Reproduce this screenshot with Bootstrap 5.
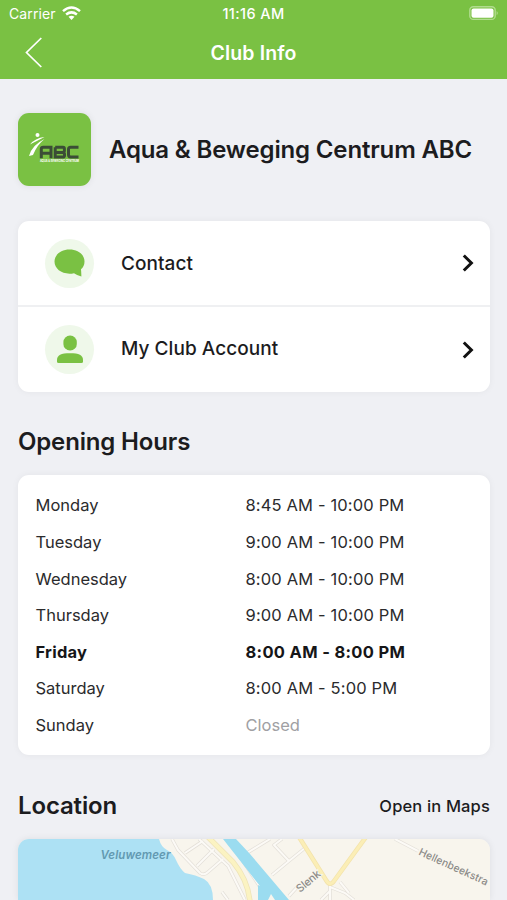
<!DOCTYPE html>
<html lang="en">
<head>
<meta charset="utf-8">
<meta name="viewport" content="width=device-width, initial-scale=1">
<title>Club Info</title>
<link href="https://cdn.jsdelivr.net/npm/bootstrap@5.3.0/dist/css/bootstrap.min.css" rel="stylesheet">
<style>
:root{--club:#7ac143;--ink:#1c1c1e}
body{font-family:Inter,"Liberation Sans",sans-serif;background:#eff0f4;color:var(--ink);height:900px;overflow:hidden}
.app-head{background:var(--club);height:79px}
.status-bar{height:27px;font-size:14px;line-height:27px}
.head-side{flex:1 1 0}
.carrier{margin-left:9px;letter-spacing:.1px}
.wifi{margin-left:6px}
.clock{font-weight:500;font-size:14.5px;letter-spacing:.4px}
.title-bar{height:52px}
.page-title{font-size:19.5px;font-weight:600;white-space:nowrap;line-height:48px;padding-bottom:1px;letter-spacing:.15px}
main{padding:34px 17px 0 18px}
.club{gap:18px;height:73px}
.club-logo{width:73px;height:73px;border-radius:11px;background:var(--club);box-shadow:0 0 7px rgba(0,0,0,.08)}
.club-name{font-size:24px;font-weight:600;letter-spacing:-.15px;white-space:nowrap;padding-top:2px}
.panel{border-radius:11px;background:#fff;box-shadow:0 0 7px rgba(0,0,0,.05)}
.menu{margin-top:35px}
.menu-row{height:84px;padding:0 16px 0 27px;color:var(--ink);text-decoration:none;font-size:19px;font-weight:500}
.menu-row+.menu-row{border-top:2px solid #eff0f2;height:87px}
.menu-label{padding-top:2px;letter-spacing:.05px}
.menu-row+.menu-row .menu-label{padding-top:0}
.bubble{width:49px;height:49px;border-radius:50%;background:#eff8ea;margin-right:27px}
.section-title{font-size:24px;line-height:30px;font-weight:600;letter-spacing:-.15px}
.hours-title{margin:35px 0 18px}
.hours{padding:12.4px 17px 11.6px 17.5px;font-size:16.5px;color:#2b2b2d}
.hours .day-row{height:36.64px}
.day-name{width:210px}
.day-time{letter-spacing:.15px}
.today{font-weight:700;color:#161618;letter-spacing:.25px}
.today .day-time{letter-spacing:.33px}
.closed{color:#a0a0a3}
.location-head{margin:36px 0 18px;height:30px}
.maps-link{font-size:16.5px;font-weight:500;color:var(--ink);letter-spacing:.15px}
.map-panel{height:61px;border-radius:11px 11px 0 0;overflow:hidden;box-shadow:0 0 7px rgba(0,0,0,.08)}
svg{display:block;flex-shrink:0}
</style>
</head>
<body>
<header class="app-head text-white">
  <div class="status-bar d-flex align-items-center">
    <div class="head-side d-flex align-items-center"><span class="carrier">Carrier</span>
      <svg class="wifi" width="19" height="15" viewBox="0 0 19 15" fill="none" stroke="#fff" stroke-width="2.5"><path d="M1 5.1Q9.5-2.2 18 5.1M4.1 8.5Q9.5 4.2 14.9 8.5"/><path d="M6.5 10.8Q9.5 8.6 12.5 10.8L9.5 14Z" fill="#fff" stroke="none"/></svg>
    </div>
    <div class="clock text-center">11:16 AM</div>
    <div class="head-side d-flex justify-content-end">
      <svg class="me-2" width="30" height="15" viewBox="0 0 30 15"><rect x=".8" y=".8" width="25.4" height="12.6" rx="3.5" fill="none" stroke="#b1dc8e" stroke-width="1.4"/><rect x="2.5" y="2.5" width="22" height="9.3" rx="2" fill="#fff"/><path d="M27.6 5Q30 7.1 27.6 9.2Z" fill="#b1dc8e"/></svg>
    </div>
  </div>
  <div class="title-bar d-flex align-items-center">
    <div class="head-side"><svg class="ms-4" width="19" height="32" viewBox="0 0 19 32" fill="none" stroke="#fff" stroke-width="1.7"><path d="M17.3 1L2.5 15.5L17.3 30"/></svg></div>
    <div class="page-title text-center">Club Info</div><div class="head-side"></div>
  </div>
</header>
<main>
  <section class="club d-flex align-items-center">
    <div class="club-logo">
      <svg width="73" height="73" viewBox="0 0 73 73">
        <circle cx="19.5" cy="22" r="2" fill="#fff"/>
        <path d="M12 31.5Q17 25 26.5 24Q17 29 12 31.5ZM26.5 26Q19 32 15 42L11 43Q14 32 26.5 26Z" fill="#fff"/>
        <path d="M23.3 45.3V36q0-1.8 2-1.8H33V45.3M24 40.3h8M37.2 34.2h7.8q1.4 0 1.4 1.6v1.8q0 1.8-1.5 1.8h-7.5M44.5 39.5q2 0 2 1.7v1.2q0 1.6-1.7 1.6h-7.6V34.2M60.5 34.3h-8q-2 0-2 2v5.4q0 2.2 2 2.2h8" fill="none" stroke="#3b4d36" stroke-width="3"/>
        <text x="22" y="49" font-size="3" font-weight="700" fill="#fff" textLength="39" lengthAdjust="spacingAndGlyphs">AQUA &amp; BEWEGING CENTRUM</text>
      </svg>
    </div>
    <h1 class="club-name mb-0">Aqua &amp; Beweging Centrum ABC</h1>
  </section>
  <nav class="panel menu">
    <a href="#" class="menu-row d-flex align-items-center">
      <span class="bubble d-flex align-items-center justify-content-center"><svg width="31" height="28" viewBox="0 0 31 28"><path fill="#7ac143" d="M15.5.5C24 .5 30.5 5.6 30.5 12.4Q30.5 17 27 20.3Q27.3 23 27.4 27.5Q23.5 26.6 20 24.2Q17.8 24.7 15.5 24.7C7 24.7.5 19.5.5 12.6S7 .5 15.5.5Z"/></svg></span>
      <span class="menu-label flex-grow-1">Contact</span>
      <svg width="12" height="20" viewBox="0 0 12 20" fill="none" stroke="#111" stroke-width="3"><path d="M1.8 2.5L9.4 10L1.8 17.5"/></svg>
    </a>
    <a href="#" class="menu-row d-flex align-items-center">
      <span class="bubble d-flex align-items-center justify-content-center"><svg width="28" height="29" viewBox="0 0 28 29" fill="#7ac143"><rect x="7.4" y=".5" width="13.4" height="15" rx="6.6"/><path d="M1 25C1 20 5 18.2 14 18.2S27 20 27 25V26.5Q27 28 25.5 28H2.5Q1 28 1 26.5Z"/></svg></span>
      <span class="menu-label flex-grow-1">My Club Account</span>
      <svg width="12" height="20" viewBox="0 0 12 20" fill="none" stroke="#111" stroke-width="3"><path d="M1.8 2.5L9.4 10L1.8 17.5"/></svg>
    </a>
  </nav>
  <h2 class="section-title hours-title">Opening Hours</h2>
  <section class="panel hours">
    <div class="day-row d-flex align-items-center"><span class="day-name">Monday</span><span class="day-time">8:45 AM - 10:00 PM</span></div>
    <div class="day-row d-flex align-items-center"><span class="day-name">Tuesday</span><span class="day-time">9:00 AM - 10:00 PM</span></div>
    <div class="day-row d-flex align-items-center"><span class="day-name">Wednesday</span><span class="day-time">8:00 AM - 10:00 PM</span></div>
    <div class="day-row d-flex align-items-center"><span class="day-name">Thursday</span><span class="day-time">9:00 AM - 10:00 PM</span></div>
    <div class="day-row d-flex align-items-center today"><span class="day-name">Friday</span><span class="day-time">8:00 AM - 8:00 PM</span></div>
    <div class="day-row d-flex align-items-center"><span class="day-name">Saturday</span><span class="day-time">8:00 AM - 5:00 PM</span></div>
    <div class="day-row d-flex align-items-center"><span class="day-name">Sunday</span><span class="closed">Closed</span></div>
  </section>
  <div class="location-head d-flex align-items-center justify-content-between">
    <h2 class="section-title mb-0">Location</h2><a href="#" class="maps-link text-decoration-none">Open in Maps</a>
  </div>
  <section class="map-panel">
    <svg width="472" height="61" viewBox="18 839 472 61">
      <path fill="#f8f5ed" d="M18 839h472v61H18z"/>
      <!-- lake -->
      <path fill="#ade1f4" d="M18 839H159Q161 847 167 850Q173 853 176 860Q180 869 185 873Q196 875 204 879Q213 884 213 900H18Z"/>
      <!-- minor streets: casing, then surface -->
      <g fill="none" stroke="#e3dfd8" stroke-width="3.4" stroke-linejoin="round">
        <path d="M172 839L178 850L200 873Q204 876 208 872L223 859M185 853L203 841M197 866L214 849M199 839L228 866L245 900M222 892L228 900"/>
        <path d="M233 846L260 887M247 853L270 839M282 839L274 845L289 861L272 875M289 861L305 848M289 896L300 884M330 884V900M330 887L345 893L354 900M340 882L349 893M321 900L330 891M395 839L418 851"/>
      </g>
      <g fill="none" stroke="#fcfaf6" stroke-width="2" stroke-linejoin="round">
        <path d="M172 839L178 850L200 873Q204 876 208 872L223 859M185 853L203 841M197 866L214 849M199 839L228 866L245 900M222 892L228 900"/>
        <path d="M233 846L260 887M247 853L270 839M282 839L274 845L289 861L272 875M289 861L305 848M289 896L300 884M330 884V900M330 887L345 893L354 900M340 882L349 893M321 900L330 891M395 839L418 851"/>
      </g>
      <!-- canal -->
      <path fill="#9bdcf0" d="M223 839H236L250 854L289 900H275L271 894L268 900H258V885L260 886Z"/>
      <!-- main roads -->
      <g fill="none" stroke-linejoin="round">
        <path stroke="#eee3b8" stroke-width="5.5" d="M208 837L233 862Q248 880 250 902"/>
        <path stroke="#fbf3c2" stroke-width="4" d="M208 837L233 862Q248 880 250 902"/>
        <path stroke="#f3e3ac" stroke-width="4.6" d="M299 837L326 880Q330 887 334 881L366 837"/>
        <path stroke="#fbeeb6" stroke-width="3" d="M299 837L326 880Q330 887 334 881L366 837"/>
      </g>
      <g font-family="Inter,sans-serif">
        <text x="100.5" y="859" font-size="11.5" font-style="italic" font-weight="600" fill="#6299b1" textLength="70">Veluwemeer</text>
        <g fill="#8c8b88" font-size="11" font-weight="500" stroke="#f8f5ed" stroke-width="2" paint-order="stroke">
          <text transform="translate(300 893) rotate(-40)" textLength="28">Slenk</text>
          <text transform="translate(418 854.5) rotate(24.5)" font-size="10.5" textLength="75">Hellenbeekstra</text>
        </g>
      </g>
    </svg>
  </section>
</main>
<script src="https://cdn.jsdelivr.net/npm/bootstrap@5.3.0/dist/js/bootstrap.bundle.min.js"></script>
</body>
</html>
